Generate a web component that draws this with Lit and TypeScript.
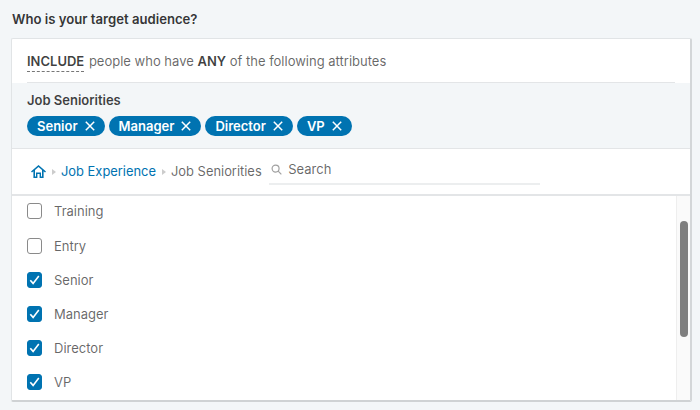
import { LitElement, html, css, svg } from "lit";
import { customElement } from "lit/decorators.js";

const options = [
  { label: "Training", on: false },
  { label: "Entry", on: false },
  { label: "Senior", on: true },
  { label: "Manager", on: true },
  { label: "Director", on: true },
  { label: "VP", on: true },
];
const pills = ["Senior", "Manager", "Director", "VP"];

@customElement("app-root")
export class AppRoot extends LitElement {
  static styles = css`
    :host {
      display: block;
      width: 700px;
      height: 410px;
      overflow: hidden;
      background: #f3f6f8;
      font-family: Inter, "Liberation Sans", sans-serif;
      color: rgba(0, 0, 0, 0.6);
      font-size: 13px;
      -webkit-font-smoothing: antialiased;
    }
    .title {
      height: 38px;
      box-sizing: border-box;
      padding: 11px 0 0 12px;
      font-size: 13.15px;
      line-height: 17px;
      font-weight: 600;
      color: rgba(0, 0, 0, 0.8);
    }
    .card {
      width: 681px;
      height: 364px;
      margin-left: 11px;
      box-sizing: border-box;
      background: #fff;
      border: 1px solid #e1e4e6;
      border-right: 2px solid #d3d6d8;
      border-bottom: 2px solid #cfd2d4;
      border-radius: 2px;
      display: flex;
      flex-direction: column;
    }
    .rule-wrap {
      height: 44px;
      box-sizing: border-box;
      margin: 0 15px;
      border-bottom: 1px solid #e3e5e7;
      padding-top: 14px;
      line-height: 17px;
      flex: none;
    }
    .rule-wrap b {
      font-weight: 600;
      color: rgba(0, 0, 0, 0.75);
    }
    .include {
      border-bottom: 1px dashed #777;
      padding-bottom: 2px;
      margin-right: 1px;
    }
    .summary {
      flex: none;
      height: 66px;
      box-sizing: border-box;
      background: #f3f6f8;
      border-bottom: 1px solid #e3e5e7;
      padding: 9px 15px 0;
    }
    .summary h3 {
      margin: 0;
      font-size: 13px;
      line-height: 17px;
      font-weight: 600;
      color: rgba(0, 0, 0, 0.75);
    }
    .pills {
      display: flex;
      gap: 4px;
      margin-top: 7px;
    }
    .pill {
      display: flex;
      align-items: center;
      gap: 7px;
      height: 20px;
      padding: 0 10px;
      border-radius: 10px;
      background: #0073b1;
      color: #fff;
      font-weight: 600;
      font-size: 13px;
    }
    .pill svg {
      width: 10px;
      height: 10px;
      stroke: #fff;
      stroke-width: 1.5;
      fill: none;
    }
    .crumbs {
      flex: none;
      height: 47px;
      box-sizing: border-box;
      border-bottom: 2px solid #e3e5e7;
      display: flex;
      align-items: center;
      padding-left: 19px;
      font-size: 12.9px;
    }
    .home {
      width: 15px;
      height: 13px;
      fill: #0073b1;
      flex: none;
    }
    .sep {
      width: 0;
      height: 0;
      border-left: 4px solid #ccc;
      border-top: 3.5px solid transparent;
      border-bottom: 3.5px solid transparent;
      margin: 0 5px 0 6px;
      flex: none;
    }
    .link {
      color: #0073b1;
    }
    .search {
      width: 271px;
      height: 30px;
      box-sizing: border-box;
      margin-left: 7.5px;
      align-self: flex-start;
      margin-top: 6px;
      border-bottom: 2px solid #eceeef;
      display: flex;
      align-items: center;
      gap: 6px;
      padding-left: 2px;
      font-size: 13px;
    }
    .search svg {
      width: 11px;
      height: 11px;
      stroke: #a0a0a0;
      stroke-width: 1.3;
      fill: none;
      flex: none;
    }
    .body {
      flex: 1;
      min-height: 0;
      display: flex;
    }
    .list {
      flex: 1;
      padding: 7.4px 15px 0;
      display: flex;
      flex-direction: column;
      gap: 18.2px;
    }
    .opt {
      height: 16px;
      display: flex;
      align-items: center;
      gap: 12px;
    }
    .box {
      width: 15px;
      height: 16px;
      box-sizing: border-box;
      border: 1px solid #8a8a8a;
      border-radius: 3px;
      background: #fff;
      flex: none;
      display: flex;
    }
    .box.on {
      background: #0073b1;
      border-color: #0073b1;
    }
    .box svg {
      width: 13px;
      height: 14px;
      stroke: #fff;
      stroke-width: 1.6;
      fill: none;
    }
    .track {
      width: 14px;
      flex: none;
      background: #fafafa;
      border-left: 1px solid #eeeeee;
      box-sizing: border-box;
    }
    .thumb {
      width: 8px;
      height: 116px;
      margin: 25px 0 0 3px;
      border-radius: 4px;
      background: #7f7f7f;
    }
  `;

  render() {
    return html`
      <div class="title">Who is your target audience?</div>
      <div class="card">
        <div class="rule-wrap">
          <b class="include">INCLUDE</b> people who have <b>ANY</b> of the following attributes
        </div>
        <div class="summary">
          <h3>Job Seniorities</h3>
          <div class="pills">
            ${pills.map(
              (p) => html`<span class="pill">${p}
                <svg viewBox="0 0 10 10">${svg`<path d="M.8.8l8.4 8.4M9.2.8L.8 9.2"/>`}</svg></span>`
            )}
          </div>
        </div>
        <div class="crumbs">
          <svg class="home" viewBox="0 0 15 13">
            ${svg`<path d="M7.5 0L0 6.4l1 1.1L2.4 6.3V13h4V9h2.2v4h4V6.3L14 7.5l1-1.1L7.5 0zM11 11.6H10V7.6H5v4H4V5l3.5-3 3.5 3v6.6z"/>`}
          </svg>
          <span class="sep"></span>
          <span class="link">Job Experience</span>
          <span class="sep"></span>
          <span>Job Seniorities</span>
          <div class="search">
            <svg viewBox="0 0 12 12">${svg`<circle cx="5" cy="5" r="3.8"/><path d="M7.8 7.8L11.3 11.3"/>`}</svg>
            <span>Search</span>
          </div>
        </div>
        <div class="body">
          <div class="list">
            ${options.map(
              (o) => html`<div class="opt">
                <span class="box ${o.on ? "on" : ""}">
                  ${o.on
                    ? html`<svg viewBox="0 0 13 14">${svg`<path d="M2.3 7.2l2.8 3.2L10.8 3"/>`}</svg>`
                    : ""}
                </span>
                <span>${o.label}</span>
              </div>`
            )}
          </div>
          <div class="track"><div class="thumb"></div></div>
        </div>
      </div>
    `;
  }
}
